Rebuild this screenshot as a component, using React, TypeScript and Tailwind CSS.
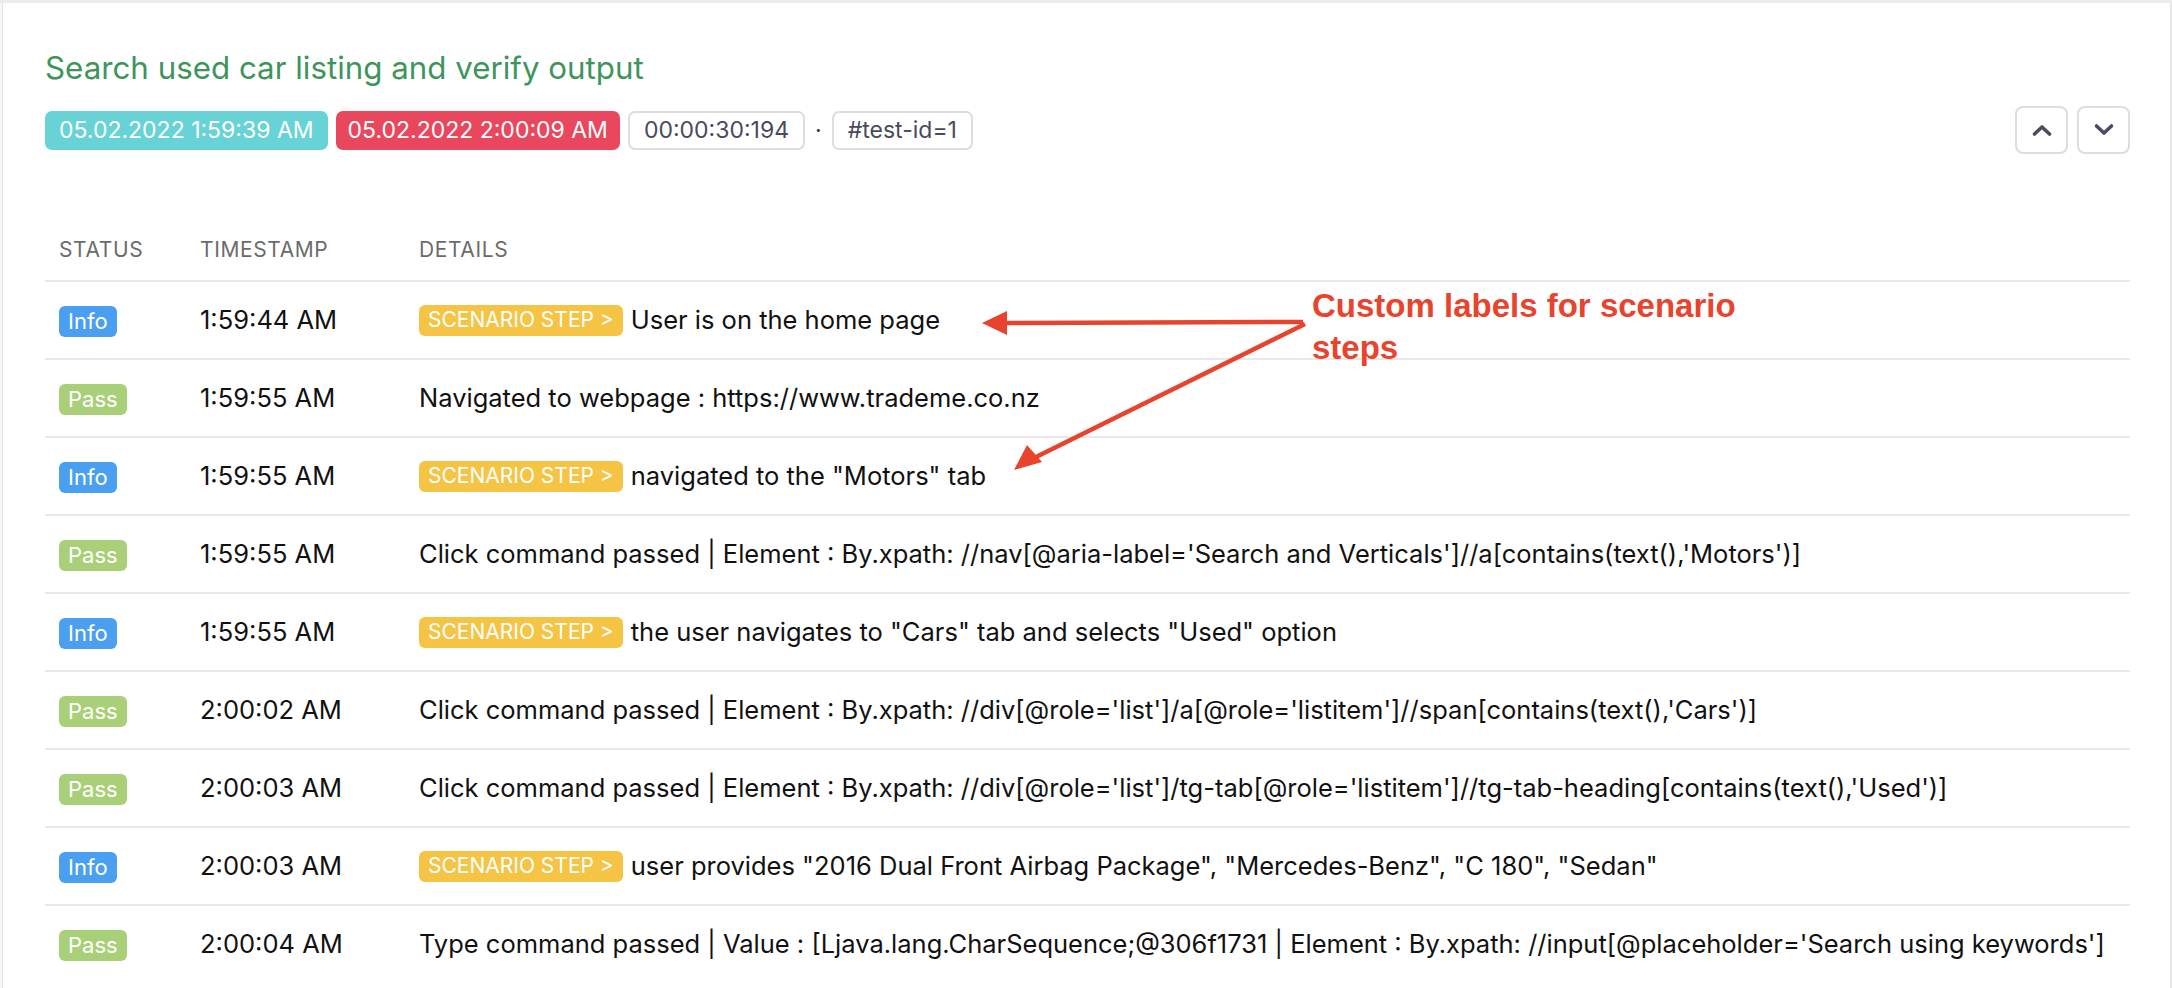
import React from 'react';

type Row = {
  status: 'Info' | 'Pass';
  time: string;
  step?: boolean;
  text: string;
};

const rows: Row[] = [
  { status: 'Info', time: '1:59:44 AM', step: true, text: 'User is on the home page' },
  { status: 'Pass', time: '1:59:55 AM', text: 'Navigated to webpage : https://www.trademe.co.nz' },
  { status: 'Info', time: '1:59:55 AM', step: true, text: 'navigated to the "Motors" tab' },
  {
    status: 'Pass',
    time: '1:59:55 AM',
    text: "Click command passed | Element : By.xpath: //nav[@aria-label='Search and Verticals']//a[contains(text(),'Motors')]",
  },
  { status: 'Info', time: '1:59:55 AM', step: true, text: 'the user navigates to "Cars" tab and selects "Used" option' },
  {
    status: 'Pass',
    time: '2:00:02 AM',
    text: "Click command passed | Element : By.xpath: //div[@role='list']/a[@role='listitem']//span[contains(text(),'Cars')]",
  },
  {
    status: 'Pass',
    time: '2:00:03 AM',
    text: "Click command passed | Element : By.xpath: //div[@role='list']/tg-tab[@role='listitem']//tg-tab-heading[contains(text(),'Used')]",
  },
  {
    status: 'Info',
    time: '2:00:03 AM',
    step: true,
    text: 'user provides "2016 Dual Front Airbag Package", "Mercedes-Benz", "C 180", "Sedan"',
  },
  {
    status: 'Pass',
    time: '2:00:04 AM',
    text: "Type command passed | Value : [Ljava.lang.CharSequence;@306f1731 | Element : By.xpath: //input[@placeholder='Search using keywords']",
  },
];

const StatusBadge = ({ status }: { status: Row['status'] }) => (
  <span
    className={
      status === 'Info'
        ? 'inline-flex h-[31px] items-center rounded-[6px] bg-[#4a9ff0] px-[9px] text-[22px] text-white'
        : 'inline-flex h-[31px] items-center rounded-[6px] bg-[#a9cf78] px-[9px] text-[22px] text-white'
    }
  >
    {status}
  </span>
);

const Chevron = ({ up }: { up?: boolean }) => (
  <svg width="22" height="14" viewBox="0 0 22 14" fill="none">
    <path
      d={up ? 'M3.5 11 L11 4 L18.5 11' : 'M3.5 3 L11 10 L18.5 3'}
      stroke="#4b4b5f"
      strokeWidth="3.6"
      strokeLinecap="round"
      strokeLinejoin="round"
    />
  </svg>
);

export default function App() {
  return (
    <div className="h-[988px] overflow-hidden bg-[#eaebed] pt-[3px] font-['Inter',sans-serif]">
      <div className="relative flex h-full">
        <div className="w-[3px] border-r border-[#e3e3e3] bg-[#f7f7f7]" />
        <div className="relative flex-1 bg-white pl-[42px] pr-[40px] pt-[46px]">
          {/* header */}
          <h1 className="text-[31.3px] leading-[38px] text-[#3d955c]">Search used car listing and verify output</h1>
          <div className="mt-[19px] flex h-[48px] items-center justify-between">
            <div className="flex items-center gap-[8px] text-[23px]">
              <span className="flex h-[39px] items-center rounded-[7px] bg-[#67d3d6] px-[14px] text-white">
                05.02.2022 1:59:39 AM
              </span>
              <span className="flex h-[39px] items-center rounded-[7px] bg-[#e8475e] px-[12px] text-white">
                05.02.2022 2:00:09 AM
              </span>
              <span className="flex h-[39px] items-center rounded-[7px] border-2 border-[#dcdce1] px-[14px] text-[#4a4a5c]">
                00:00:30:194
              </span>
              <span className="px-[2px] text-[#333]">·</span>
              <span className="flex h-[39px] items-center rounded-[7px] border-2 border-[#dcdce1] px-[14px] text-[#4a4a5c]">
                #test-id=1
              </span>
            </div>
            <div className="flex gap-[9px]">
              <button className="flex h-[48px] w-[53px] items-center justify-center rounded-[8px] border-2 border-[#dcdce1] bg-white">
                <Chevron up />
              </button>
              <button className="flex h-[48px] w-[53px] items-center justify-center rounded-[8px] border-2 border-[#dcdce1] bg-white">
                <Chevron />
              </button>
            </div>
          </div>

          {/* table */}
          <div className="mt-[66px]">
            <div className="grid h-[60px] grid-cols-[141px_219px_1fr] items-center px-[14px] text-[21px] tracking-[0.6px] text-[#6b6b6b]">
              <span>STATUS</span>
              <span>TIMESTAMP</span>
              <span>DETAILS</span>
            </div>
            {rows.map((r, i) => (
              <div
                key={i}
                className="grid h-[78px] grid-cols-[141px_219px_1fr] items-center border-t-2 border-[#e9e9e9] px-[14px] text-[25.5px] text-[#111]"
              >
                <div>
                  <StatusBadge status={r.status} />
                </div>
                <div>{r.time}</div>
                <div className="flex items-center gap-[8px] whitespace-nowrap">
                  {r.step && (
                    <span className="inline-flex h-[31px] items-center rounded-[6px] bg-[#f5c445] px-[9px] text-[21px] text-white">
                      SCENARIO STEP &gt;
                    </span>
                  )}
                  <span>{r.text}</span>
                </div>
              </div>
            ))}
          </div>

          {/* annotation */}
          <div className="absolute left-[1309px] top-[282px] font-['Liberation_Sans',Arial,sans-serif] text-[33px] font-bold leading-[42px] text-[#e8432d]">
            Custom labels for scenario
            <br />
            steps
          </div>
          <svg className="pointer-events-none absolute left-0 top-0" width="2166" height="985" viewBox="0 0 2166 985">
            <g transform="translate(-4 -3)">
              <line x1="1304" y1="322" x2="1004" y2="323" stroke="#e8432d" strokeWidth="4.5" />
              <polygon points="983,323 1008,311 1008,335" fill="#e8432d" />
              <line x1="1306" y1="324" x2="1035" y2="458" stroke="#e8432d" strokeWidth="4.5" />
              <polygon points="1015,470 1028,445 1043,462" fill="#e8432d" />
            </g>
          </svg>
        </div>
        <div className="w-[2px] bg-[#e6e6e6]" />
      </div>
    </div>
  );
}
